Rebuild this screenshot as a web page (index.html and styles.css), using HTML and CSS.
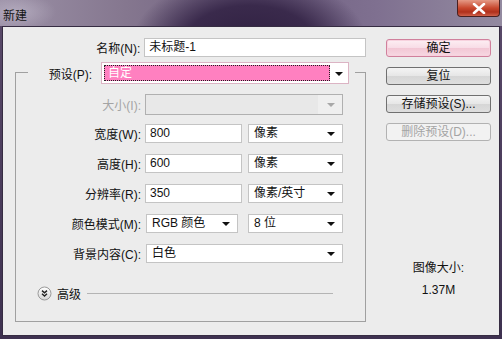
FILE: index.html
```html
<!DOCTYPE html>
<html lang="zh-CN">
  <head>
    <meta charset="UTF-8" />
    <title>新建</title>
    <link rel="stylesheet" href="styles.css">
  </head>
  <body>
    <div class="window">
      <div class="titlebar">
        <span class="title">新建</span>
        <div class="close">
          <svg width="14" height="11" viewBox="0 0 14 11">
            <path d="M2 1 L12 10 M12 1 L2 10" stroke="#fff" stroke-width="2.6" stroke-linecap="round" />
          </svg>
        </div>
      </div>

      <div class="dialog">
        <div class="main">
          <div class="row name-row">
            <label class="lbl">名称(N):</label>
            <div class="field w-name">未标题-1</div>
          </div>

          <div class="group">
            <div class="preset-row">
              <label class="lbl">预设(P):</label>
              <div class="select preset">
                <span class="focus">自定</span>
                <span class="arrow"></span>
              </div>
            </div>

            <div class="row size-row">
              <label class="lbl disabled">大小(I):</label>
              <div class="select w-size off"><span class="arrow"></span></div>
            </div>

            <div class="rows">
              <div class="row">
                <label class="lbl">宽度(W):</label>
                <div class="field w-num">800</div>
                <div class="select w-unit">像素<span class="arrow"></span></div>
              </div>
              <div class="row">
                <label class="lbl">高度(H):</label>
                <div class="field w-num">600</div>
                <div class="select w-unit">像素<span class="arrow"></span></div>
              </div>
              <div class="row">
                <label class="lbl">分辨率(R):</label>
                <div class="field w-num">350</div>
                <div class="select w-unit">像素/英寸<span class="arrow"></span></div>
              </div>
              <div class="row">
                <label class="lbl">颜色模式(M):</label>
                <div class="select w-mode">RGB 颜色<span class="arrow"></span></div>
                <div class="select w-unit">8 位<span class="arrow"></span></div>
              </div>
              <div class="row">
                <label class="lbl">背景内容(C):</label>
                <div class="select w-bg">白色<span class="arrow"></span></div>
              </div>
            </div>

            <div class="advanced">
              <svg width="15" height="15" viewBox="0 0 15 15">
                <defs>
                  <linearGradient id="knob" x1="0" y1="0" x2="0" y2="1">
                    <stop offset="0" stop-color="#ffffff" />
                    <stop offset="1" stop-color="#d6d6d6" />
                  </linearGradient>
                </defs>
                <circle cx="7.5" cy="7.5" r="6.5" fill="url(#knob)" stroke="#9a9a9a" />
                <path d="M5 4.6 L7.5 6.8 L10 4.6 M5 7.8 L7.5 10 L10 7.8" fill="none" stroke="#222" stroke-width="1.4" />
              </svg>
              <span>高级</span>
              <span class="rule"></span>
            </div>
          </div>
        </div>

        <div class="side">
          <div class="btn default">确定</div>
          <div class="btn">复位</div>
          <div class="btn">存储预设(S)...</div>
          <div class="btn disabled">删除预设(D)...</div>
          <div class="info">
            <div>图像大小:</div>
            <div>1.37M</div>
          </div>
        </div>
      </div>
    </div>
  </body>
</html>
```

FILE: styles.css
```css
body {
  margin: 0;
  font-family: "Liberation Sans", "Noto Sans CJK SC", sans-serif;
  font-size: 12px;
  color: #111;
}

.window {
  width: 502px;
  height: 339px;
  display: flex;
  flex-direction: column;
  background: linear-gradient(#5a4a6a, #3e3150);
  overflow: hidden;
}

/* title bar, aero frame */
.titlebar {
  height: 26px;
  display: flex;
  align-items: flex-start;
  justify-content: space-between;
  background:
    radial-gradient(ellipse 40px 18px at 16px 12px, rgba(190, 182, 200, 0.7), rgba(190, 182, 200, 0)),
    radial-gradient(ellipse 118px 70px at 250px 44px, #2f2040 0%, #3a2a4c 55%, rgba(70, 55, 90, 0) 100%),
    linear-gradient(to right, #9b90a6 0%, #85778f 25%, #6f5f80 50%, #7f7090 75%, #938aa0 100%);
}
.title {
  margin: 6px 0 0 3px;
  font-size: 12px;
  color: #151515;
}
.close {
  width: 43px;
  height: 17px;
  margin-right: 2px;
  display: flex;
  align-items: center;
  justify-content: center;
  border: 1px solid #4a2020;
  border-top: none;
  border-radius: 0 0 4px 4px;
  background: linear-gradient(#e59a86, #c8482e 50%, #b0301c 75%, #d0604a);
  box-sizing: border-box;
}

/* dialog body */
.dialog {
  flex: 1;
  margin: 0 2px 3px;
  border: 1px solid #362c42;
  background: #ececec;
  display: flex;
}
.main {
  width: 363px;
  padding-top: 11px;
}
.row {
  display: flex;
  align-items: center;
  gap: 4px;
}
.lbl {
  text-align: right;
  white-space: nowrap;
}
.lbl.disabled {
  color: #a4a4a4;
}
.name-row .lbl {
  width: 138px;
}
.group .row .lbl {
  width: 125px;
}

.field,
.select {
  position: relative;
  height: 19px;
  box-sizing: border-box;
  border: 1px solid #c4c4c4;
  background: #fff;
  padding-left: 5px;
  line-height: 17px;
  white-space: nowrap;
}
.field {
  padding-left: 4px;
}
.w-name { width: 223px; }
.w-num { width: 97px; }
.w-unit { width: 95px; margin-left: 2px; }
.w-mode { width: 92px; margin-left: 1px; }
.w-mode + .w-unit { margin-left: 6px; }
.w-bg { width: 197px; margin-left: 1px; }
.w-size { width: 198px; height: 21px; }
.select.off {
  background: linear-gradient(to right, #e8e8e8 0 88%, #efefef 88%);
  border-color: #b0b0b0;
}

.arrow {
  position: absolute;
  right: 7px;
  top: 7px;
  border-left: 4px solid transparent;
  border-right: 4px solid transparent;
  border-top: 4px solid #111;
}
.off .arrow {
  top: 8px;
  border-top-color: #a8a8a8;
}

/* group box with preset row sitting on its top edge */
.group {
  margin: 15px 0 0 12px;
  width: 351px;
  height: 250px;
  box-sizing: border-box;
  border: 1px solid #a0a0a0;
}
.preset-row {
  margin: -11px 0 0 12px;
  width: 327px;
  display: flex;
  align-items: center;
  gap: 9px;
  background: #ececec;
}
.preset-row .lbl {
  width: 64px;
}
.select.preset {
  width: 248px;
  height: 22px;
  padding: 2px;
  border-color: #dcb4c4;
}
.focus {
  display: block;
  width: 226px;
  height: 16px;
  box-sizing: border-box;
  border: 1px dotted #222;
  background: #ff80c0;
  color: #fff;
  line-height: 14px;
  padding-left: 3px;
}
.preset .arrow {
  right: 5px;
  top: 9px;
}

.size-row {
  margin-top: 10px;
}
.rows {
  margin-top: 9px;
  display: flex;
  flex-direction: column;
  gap: 11px;
}

.advanced {
  margin: 22px 0 0 21px;
  display: flex;
  align-items: center;
  gap: 5px;
}
.advanced span {
  font-size: 12px;
}
.rule {
  width: 246px;
  margin-left: 1px;
  border-top: 1px solid #b4b4b4;
}

/* right column */
.side {
  margin-left: 20px;
  padding-top: 12px;
  width: 105px;
  display: flex;
  flex-direction: column;
  gap: 10px;
}
.btn {
  height: 18px;
  box-sizing: border-box;
  border: 1px solid #707070;
  border-radius: 3px;
  background: linear-gradient(#f4f4f4, #e6e6e6 50%, #d6d6d6 51%, #dedede);
  text-align: center;
  line-height: 16px;
}
.btn.default {
  border-color: #d0809c;
  box-shadow: inset 0 0 0 1px #f7d2de;
  background: linear-gradient(#fdeef3, #f8dce6 50%, #f2c6d4 51%, #f7d8e2);
}
.btn.disabled {
  border-color: #b2b2b2;
  background: #f2f2f2;
  color: #a4a4a4;
}
.info {
  margin-top: 106px;
  text-align: center;
  line-height: 22px;
}
```
